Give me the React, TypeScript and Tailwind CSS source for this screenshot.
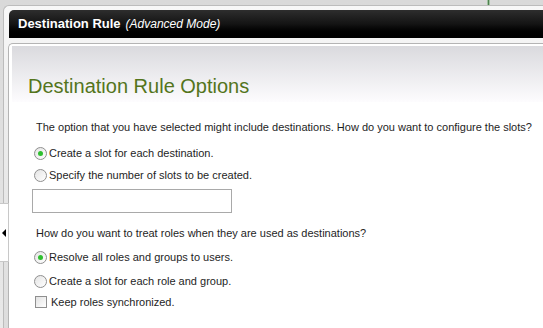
import React from 'react';

const Radio = ({ checked }: { checked?: boolean }) => (
  <span className="flex h-[13px] w-[13px] items-center justify-center rounded-full border border-[#8f8f8f] bg-gradient-to-br from-[#e4e4e4] to-white">
    {checked && <span className="h-[5px] w-[5px] rounded-full bg-[#2fbf2f]" />}
  </span>
);

const Option = ({ label, checked }: { label: string; checked?: boolean }) => (
  <label className="flex h-[16px] items-center gap-[2px] pl-[2px]">
    <Radio checked={checked} />
    <span>{label}</span>
  </label>
);

export default function App() {
  return (
    <div className="relative h-[328px] w-[543px] overflow-hidden bg-gradient-to-b from-[#d9d9d9] to-[#e9e9e9] font-['Liberation_Sans',Arial,sans-serif] text-[11px] text-[#1e1e1e]">
      {/* little green tick peeking from the page behind */}
      <div className="absolute left-[487px] top-0 flex h-[5px]">
        <span className="w-px bg-[#9fc29f]" />
        <span className="w-px bg-[#4f7f4f]" />
        <span className="w-px bg-[#9fc29f]" />
      </div>

      <div className="ml-[3px] mt-[5px] h-full rounded-tl-[6px] border-l border-t border-[#bcbcbc] bg-gradient-to-b from-[#f7f7f7] to-[#dcdcdc] pl-[5px] pt-[4px]">
        <div className="flex h-[28px] items-center rounded-tl-[5px] bg-gradient-to-b from-[#2e2e2e] via-[#141414] to-black pl-[9px] text-[13px] text-white">
          <span className="font-bold">Destination Rule</span>
          <span className="ml-[5px] text-[12px] italic">(Advanced Mode)</span>
        </div>

        <div className="ml-[-1px] mt-[5px] h-full rounded-tl-[5px] border-l border-t border-[#b4b4b4] bg-white pl-[3px] pt-[2px]">
          <div className="h-[56px] bg-gradient-to-b from-[#dadade] to-[#fdfcfe] pl-[16px] pt-[28px] text-[20px] leading-[24px] text-[#54751c]">
            Destination Rule Options
          </div>

          <div className="pl-[20px] leading-[14px]">
            <p className="mt-[18px] pl-[4px]">
              The option that you have selected might include destinations. How do you want to configure the slots?
            </p>
            <div className="mt-[11px]">
              <Option label="Create a slot for each destination." checked />
            </div>
            <div className="mt-[6px]">
              <Option label="Specify the number of slots to be created." />
            </div>
            <input className="mt-[6px] block h-[24px] w-[200px] border border-[#a9a9a9] bg-white outline-none" />

            <p className="mt-[13px] pl-[4px]">How do you want to treat roles when they are used as destinations?</p>
            <div className="mt-[9px]">
              <Option label="Resolve all roles and groups to users." checked />
            </div>
            <div className="mt-[8px]">
              <Option label="Create a slot for each role and group." />
            </div>
            <label className="mt-[5px] flex h-[16px] items-center gap-[4px] pl-[3px]">
              <span className="h-[12px] w-[12px] border border-[#8f8f8f] bg-gradient-to-br from-[#e2e2e2] to-white" />
              <span>Keep roles synchronized.</span>
            </label>
          </div>
        </div>
      </div>

      {/* splitter collapse handle */}
      <div className="absolute left-0 top-[203px] flex h-[59px] w-[9px] items-center border-y border-r border-[#c8c8c8] bg-white pl-[2px]">
        <span className="h-0 w-0 border-y-[4px] border-r-[4px] border-y-transparent border-r-black" />
      </div>
    </div>
  );
}
